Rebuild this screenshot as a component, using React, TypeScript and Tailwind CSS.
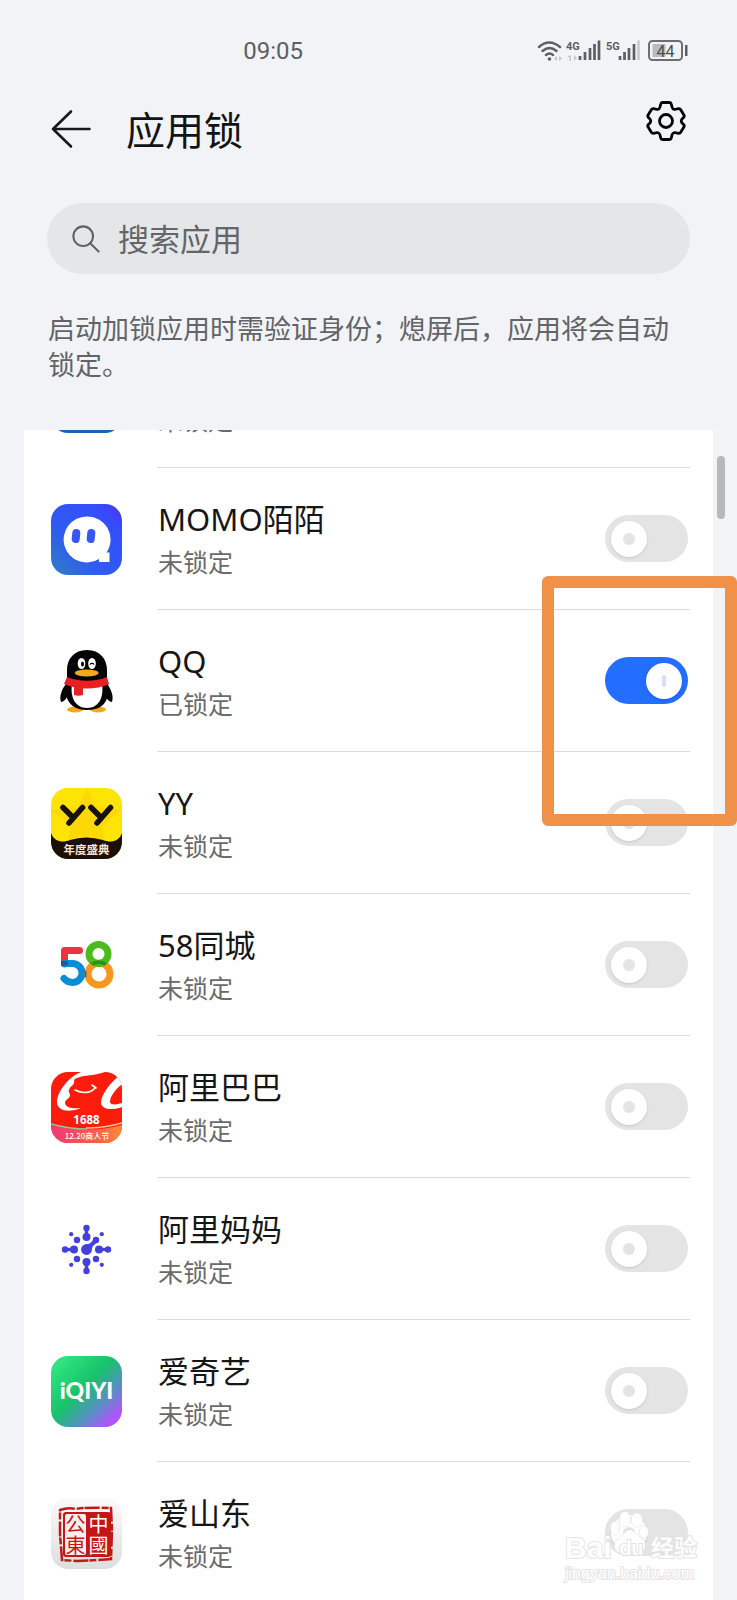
import type { ReactNode } from "react";

function MailIcon() {
  return (
    <svg viewBox="0 0 71 71" className="h-full w-full" aria-hidden="true">
      <rect width="71" height="71" rx="17" fill="#1c63b4" />
      <path d="M14 24h43v26H14z" fill="#fff" />
      <path d="M14 24l21 16 22-16" fill="none" stroke="#1c63b4" strokeWidth="3" />
    </svg>
  );
}

function MomoIcon() {
  return (
    <svg viewBox="0 0 71 71" className="h-full w-full" aria-hidden="true">
      <defs>
        <linearGradient id="momo" x1="0" y1="1" x2="1" y2="0">
          <stop offset="0" stopColor="#2f7fc4" />
          <stop offset="0.35" stopColor="#2f5cf0" />
          <stop offset="0.75" stopColor="#3350fb" />
          <stop offset="1" stopColor="#4a35fa" />
        </linearGradient>
      </defs>
      <rect width="71" height="71" rx="17" fill="url(#momo)" />
      <path d="M35.500 12.500a23 23 0 1 0 12.500 42.400V58h10.500V48.500h-3A23 23 0 0 0 35.500 12.500z" fill="#fff" />
      <rect x="21" y="25" width="8" height="14" rx="4" fill="#3457f5" transform="rotate(6 25 32)" />
      <rect x="36" y="25" width="8" height="14" rx="4" fill="#3457f5" transform="rotate(6 40 32)" />
    </svg>
  );
}

function QqIcon() {
  return (
    <svg viewBox="0 0 71 71" className="h-full w-full" aria-hidden="true">
      <ellipse cx="24" cy="63.500" rx="8" ry="3" fill="#f6a81c" />
      <ellipse cx="47" cy="63.500" rx="8" ry="3" fill="#f6a81c" />
      <path d="M15 38C11 43 8 50 10 56c3 0 6-4 8-9zM56 38c4 5 7 12 5 18-3 0-6-4-8-9z" fill="#050505" />
      <path d="M36 4C23 4 16 13 16 24v11c-2 5-2 10-1 14 2 9 9 15 21 15s19-5 21-15c1-4 1-9-1-14V24C56 13 49 4 36 4z" fill="#050505" />
      <path d="M21 38h30c2 13-3 24-15 24S19 51 21 38z" fill="#fff" />
      <path d="M16 31c12 5 28 5 40 0l2 7c-13 6-31 6-45 0z" fill="#e91f23" />
      <path d="M23 39l9 1v9c-3 1-6 1-9 0z" fill="#e91f23" />
      <ellipse cx="30.500" cy="17.500" rx="3.800" ry="5.500" fill="#fff" />
      <ellipse cx="41" cy="17.500" rx="3.800" ry="5.500" fill="#fff" />
      <ellipse cx="31.500" cy="18" rx="1.500" ry="2.500" fill="#050505" />
      <path d="M39 18.500c1-1.500 3-1.500 4 0" fill="none" stroke="#050505" strokeWidth="1.300" />
      <ellipse cx="35.700" cy="27" rx="12" ry="3.400" fill="#f6a81c" />
    </svg>
  );
}

function YyIcon() {
  return (
    <svg viewBox="0 0 71 71" className="h-full w-full" aria-hidden="true">
      <defs>
        <clipPath id="yyClip">
          <rect width="71" height="71" rx="17" />
        </clipPath>
      </defs>
      <g clipPath="url(#yyClip)">
        <rect width="71" height="71" fill="#fde404" />
        <path d="M36 0l9 19 26 3-20 16 4 18H16l4-18L0 22l27-3z" fill="#fbd008" opacity="0.600" />
        <path d="M0 45c3 9 12 10 19 7q16-5 33 0c7 3 16 2 19-7v26H0z" fill="#1c0f0a" />
        <text x="35.500" y="65.500" textAnchor="middle" fontSize="11.500" className="font-['Noto_Sans_CJK_SC',sans-serif] font-bold" fill="#f9e5cf">
          年度盛典
        </text>
      </g>
      <path d="M12 19.500l8 8M31.500 19.500L18 35M40 19.500l8 8M59.500 19.500L46 35" fill="none" stroke="#17120a" strokeWidth="5.600" strokeLinecap="round" />
    </svg>
  );
}

function TongchengIcon() {
  return (
    <svg viewBox="0 0 71 71" className="h-full w-full" fill="none" strokeWidth="7" aria-hidden="true">
      <path d="M28.500 20.500H13.500V34" stroke="#ee3340" strokeLinecap="round" strokeLinejoin="round" />
      <path d="M13.500 33.500h8a9.500 9.500 0 1 1 0 19q-5 0-8.500-4" stroke="#0b8cd6" strokeLinecap="round" />
      <path d="M13.500 31v4.500" stroke="#1d5a98" />
      <circle cx="48" cy="44" r="11" stroke="#f8961e" />
      <circle cx="47.500" cy="24" r="9.500" stroke="#4bbb1d" />
      <path d="M41 34q6.500 -3.500 14 0" stroke="#2f9020" strokeWidth="3.500" />
      <path d="M34.500 41v6" stroke="#3d6a78" strokeWidth="2" />
    </svg>
  );
}

function AlibabaIcon() {
  return (
    <svg viewBox="0 0 71 71" className="h-full w-full" aria-hidden="true">
      <defs>
        <clipPath id="aliClip">
          <rect width="71" height="71" rx="17" />
        </clipPath>
        <linearGradient id="aliBand">
          <stop offset="0" stopColor="#ee3a75" />
          <stop offset="0.600" stopColor="#fb5a4c" />
          <stop offset="1" stopColor="#fd8b36" />
        </linearGradient>
      </defs>
      <g clipPath="url(#aliClip)">
        <rect width="71" height="71" fill="#fd1b0b" />
        <path d="M0 53q36 9 71 0v18H0z" fill="url(#aliBand)" />
        <path d="M0 52q18 5 36 5" fill="none" stroke="#8fc7a0" strokeWidth="1.500" />
        <path d="M71 51q-17 5 -36 5" fill="none" stroke="#f7c38c" strokeWidth="1.500" />
        <path d="M30 0C19 4 6 19 6 30c0 9 12 11 24 6-8 1-15 0-16-5 0-4 5-4 5-8 0-2-2-3-1-5 1-4 4-4 5-7 1-2-1-3 1-4 6-4 19-3 30-7z" fill="#fff" />
        <path d="M24 18c8 4 16 3 20-2M41 13l4 3" fill="none" stroke="#fff" strokeWidth="1.600" strokeLinecap="round" />
        <path d="M71 1C60 10 50 22 50 31c0 6 11 8 21 4v-4c-6 2-12 2-12-1 0-6 6-13 12-18z" fill="#fff" />
      </g>
      <text x="35.500" y="51.500" textAnchor="middle" fontSize="11.500" className="font-['Noto_Sans'] font-bold" fill="#fff">
        1688
      </text>
      <text x="36" y="67" textAnchor="middle" fontSize="8" className="font-['Noto_Sans_CJK_SC',sans-serif] font-medium" fill="#fff">
        12.20商人节
      </text>
    </svg>
  );
}

function AlimamaIcon() {
  return (
    <svg viewBox="-35.500 -35.500 71 71" className="h-full w-full" fill="#4440dc" stroke="none" aria-hidden="true">
      {[0, 90, 180, 270].map((angle) => (
        <g key={angle} transform={`rotate(${angle})`}>
          <circle cx="12.500" cy="0" r="4" />
          <circle cx="21.500" cy="0" r="3.200" />
          <path d="M14 -3q3 2.500 6.500 .5v5q-3.500 -2 -6.500 .5z" />
          <circle cx="9.500" cy="9.500" r="3.200" />
          <circle cx="15.300" cy="15.300" r="2.100" />
        </g>
      ))}
      <circle r="5.400" />
      <path d="M-1 -5q6 0 8.500 -7l4.500 4.500q-7 3 -7 9z" />
    </svg>
  );
}

function IqiyiIcon() {
  return (
    <svg viewBox="0 0 71 71" className="h-full w-full" aria-hidden="true">
      <defs>
        <linearGradient id="iqiyi" x1="0" y1="0" x2="1" y2="1">
          <stop offset="0" stopColor="#37ee82" />
          <stop offset="0.450" stopColor="#17c26c" />
          <stop offset="0.680" stopColor="#5590c0" />
          <stop offset="0.880" stopColor="#b154fb" />
        </linearGradient>
      </defs>
      <rect width="71" height="71" rx="17" fill="url(#iqiyi)" />
      <text x="35.500" y="43" textAnchor="middle" fontSize="23" className="font-[Lato] font-black" fill="#fff">
        iQIYI
      </text>
    </svg>
  );
}

function ShandongIcon() {
  return (
    <svg viewBox="0 0 71 71" className="h-full w-full" aria-hidden="true">
      <defs>
        <linearGradient id="paper" x1="0" y1="0" x2="0" y2="1">
          <stop offset="0" stopColor="#fafafa" />
          <stop offset="1" stopColor="#dedede" />
        </linearGradient>
      </defs>
      <rect width="71" height="71" rx="17" fill="url(#paper)" />
      <path d="M9 12q8-3 16-1 12-2 35-1l1 22-1 29-14 1-20 1-15-1-2-26z" fill="none" stroke="#bf1a1a" strokeWidth="2.500" strokeDasharray="15 2 7 1" />
      <rect x="12" y="14" width="48" height="45" rx="3" fill="#c41616" />
      <rect x="14" y="16" width="21" height="41" rx="2" fill="#f8eeee" />
      <g className="font-['Noto_Sans_CJK_SC',sans-serif]" fontSize="20" textAnchor="middle">
        <text x="24.500" y="33.500" fill="#c41616">公</text>
        <text x="24.500" y="54.500" fill="#c41616">東</text>
        <text x="47.500" y="33.500" fill="#fff">中</text>
        <text x="47.500" y="54.500" fill="#fff">國</text>
      </g>
    </svg>
  );
}

function StatusIcons() {
  return (
    <svg viewBox="0 0 152 24" className="h-6 w-[152px]" fill="none" aria-label="Wi-Fi, 4G, 5G, 44%" role="img">
      <g stroke="#5d5f62" strokeWidth="2.400" strokeLinecap="round">
        <path d="M2 8q10-9 21 0M5.500 12q7-6 14 0M9 16q3.500-3 7 0" />
      </g>
      <circle cx="12.500" cy="20" r="1.800" fill="#5d5f62" />
      <path d="M17 19.500l3-2.500v5zM25 19.500l-3-2.500v5zM30 19l2.500-3v6h1.500v-6M40 19l-3-3v6z" fill="#c3c5c9" />
      <g fontSize="11" className="font-[Roboto] font-bold" fill="#5d5f62">
        <text x="29" y="11">4G</text>
        <text x="69" y="11">5G</text>
      </g>
      <g stroke="#5d5f62" strokeWidth="2.700">
        <path d="M43 21v-4M48 21v-8M53 21V9M57.500 21V5M62 21V1.500M83 21v-4M87.500 21v-8M92 21V9M97 21V5" />
      </g>
      <path d="M101.500 21V1.500" stroke="#c9cbcf" strokeWidth="2.700" />
      <rect x="112" y="2" width="33" height="19" rx="3.500" stroke="#6c6e71" strokeWidth="2" />
      <rect x="115.500" y="5" width="13" height="13" fill="#b9bbbe" />
      <rect x="148" y="6" width="2.500" height="11" fill="#5d5f62" />
      <text x="128.500" y="17.500" textAnchor="middle" fontSize="16" className="font-[Roboto]" fill="#4c4e51">
        44
      </text>
    </svg>
  );
}

type AppEntry = {
  id: string;
  name?: string;
  icon: ReactNode;
  locked?: boolean;
};

const apps: AppEntry[] = [
  { id: "mail", icon: <MailIcon /> },
  { id: "momo", name: "MOMO陌陌", icon: <MomoIcon /> },
  { id: "qq", name: "QQ", icon: <QqIcon />, locked: true },
  { id: "yy", name: "YY", icon: <YyIcon /> },
  { id: "58", name: "58同城", icon: <TongchengIcon /> },
  { id: "1688", name: "阿里巴巴", icon: <AlibabaIcon /> },
  { id: "alimama", name: "阿里妈妈", icon: <AlimamaIcon /> },
  { id: "iqiyi", name: "爱奇艺", icon: <IqiyiIcon /> },
  { id: "shandong", name: "爱山东", icon: <ShandongIcon /> },
];

function AppRow({ id, name, icon, locked = false }: AppEntry) {
  return (
    <li className="flex h-[142px] items-center gap-[35px] pr-[23px] pl-[27px]">
      <div className="h-[71px] w-[71px] shrink-0">{icon}</div>
      <label className="flex h-full flex-1 items-center justify-between border-b border-[#dcdcdc] pr-0.5 pl-px">
        <span className="flex flex-col pt-0.5">
          <span className="h-[42px] font-['Noto_Sans','Noto_Sans_CJK_SC',sans-serif] text-[31px] leading-[42px] text-[#161616]">
            {name}
          </span>
          <span className="text-[25px] leading-[42px] text-[#6a6a6a]">{locked ? "已锁定" : "未锁定"}</span>
        </span>
        <input
          type="checkbox"
          role="switch"
          aria-label={name ?? id}
          defaultChecked={locked}
          className="grid h-[47px] w-[83px] shrink-0 appearance-none content-center justify-start rounded-full bg-[#e4e4e4] px-1.5 before:col-start-1 before:row-start-1 before:h-9 before:w-9 before:rounded-full before:bg-white before:shadow-sm after:col-start-1 after:row-start-1 after:h-3 after:w-3 after:place-self-center after:rounded-full after:bg-[#e4e4e4] checked:justify-end checked:bg-[#236dff] checked:after:w-1 checked:after:rounded-sm checked:after:bg-[#d5dffc]"
        />
      </label>
    </li>
  );
}

function Watermark() {
  return (
    <div className="pointer-events-none absolute right-10 bottom-4 w-[132px] font-['Liberation_Sans','Noto_Sans_CJK_SC',sans-serif] text-white opacity-90 [paint-order:stroke] [-webkit-text-stroke:2px_#e2e2e2]">
      <svg viewBox="0 0 44 60" className="absolute bottom-4 left-11 h-[60px] w-11" fill="#fff" stroke="#dcdcdc" aria-hidden="true">
        <ellipse cx="16" cy="11" rx="5.500" ry="7.500" />
        <ellipse cx="28" cy="12" rx="5.500" ry="7" />
        <ellipse cx="6" cy="20" rx="4.500" ry="6.500" />
        <ellipse cx="35" cy="24" rx="4.500" ry="6" />
        <path d="M21 22c-5 0-7 6-12 9-5 4-5 13 3 14 6 1 12 1 18 0 8-1 8-10 3-14-5-3-7-9-12-9z" />
      </svg>
      <div className="relative flex items-center justify-between font-bold">
        <span className="text-[30px] leading-8">Bai</span>
        <span className="text-xl leading-8">du</span>
        <span className="text-[23px] leading-8">经验</span>
      </div>
      <div className="relative text-base leading-5">jingyan.baidu.com</div>
    </div>
  );
}

export default function App() {
  return (
    <div className="relative flex h-screen flex-col overflow-hidden bg-[#f1f3f7] font-['Noto_Sans_CJK_SC',sans-serif]">
      {/* status bar */}
      <div className="flex h-[101px] shrink-0 items-center justify-between pr-12 pl-[33%] text-[#5d5f62]">
        <span className="font-[Roboto] text-2xl">09:05</span>
        <StatusIcons />
      </div>

      {/* title bar */}
      <header className="flex h-14 shrink-0 items-center pr-[51px] pl-[51px]">
        <button type="button" aria-label="返回" className="h-10 w-10">
          <svg viewBox="0 0 40 40" className="h-10 w-10" fill="none" stroke="#17181a" strokeWidth="2.600" strokeLinecap="round" strokeLinejoin="round">
            <path d="M38.500 20H2M20 2.500L2 20l18 17.500" />
          </svg>
        </button>
        <h1 className="ml-[35px] flex-1 self-start text-[39px] leading-[54px] text-[#121316]">应用锁</h1>
        <button type="button" aria-label="设置" className="h-10 w-10 self-start">
          <svg viewBox="0 0 40 40" className="h-10 w-10" fill="none" stroke="#050505" strokeWidth="2.800" strokeLinejoin="round">
            <path d="M16.500 1.500h7q1.500 0 1.800 1.500l.7 3q.5 2 2.500 2.500l4-.8q1.500-.2 2.200 1l3.200 5.300q.8 1.300-.3 2.400l-1.600 1.600q-1.400 2 0 4l1.600 1.600q1.100 1.100.3 2.400l-3.200 5.300q-.7 1.200-2.200 1l-4-.8q-2 .5-2.500 2.500l-.7 3q-.3 1.500-1.800 1.500h-7q-1.500 0-1.800-1.500l-.7-3q-.5-2-2.500-2.500l-4 .8q-1.500.2-2.200-1L2.100 26q-.8-1.300.3-2.400L4 22q1.400-2 0-4l-1.600-1.600Q1.300 15.300 2.100 14l3.200-5.300q.7-1.200 2.200-1l4 .8q2-.5 2.500-2.500l.7-3q.3-1.500 1.800-1.500z" />
            <circle cx="20" cy="20" r="6.500" />
          </svg>
        </button>
      </header>

      {/* search */}
      <label className="mx-[47px] mt-[46px] flex h-[71px] shrink-0 items-center gap-[18px] rounded-full bg-[#e5e6e8] px-[25px]">
        <svg viewBox="0 0 30 30" className="h-7 w-7 shrink-0" fill="none" stroke="#5f6164" strokeWidth="2.200" strokeLinecap="round" aria-hidden="true">
          <circle cx="12" cy="12" r="10.500" />
          <path d="M19.500 19.500l9 9" />
        </svg>
        <input type="search" aria-label="搜索应用" placeholder="搜索应用" className="w-full bg-transparent text-[31px] outline-none placeholder:text-[#636568]" />
      </label>

      <p className="mx-12 mt-9 shrink-0 text-[27px] leading-9 text-[#626467]">
        启动加锁应用时需验证身份；熄屏后，应用将会自动锁定。
      </p>

      {/* app list, scrolled part of the way past its first row */}
      <main className="mx-6 mt-12 min-h-0 flex-1 overflow-hidden bg-white">
        <ul className="-mt-26">
          {apps.map((app) => (
            <AppRow key={app.id} {...app} />
          ))}
        </ul>
      </main>

      {/* scroll thumb */}
      <div className="absolute top-[456px] right-3 h-[63px] w-2 rounded-full bg-[#b7b8bc]" />

      {/* highlight box */}
      <div className="pointer-events-none absolute top-[576px] right-0 h-[250px] w-[195px] rounded-md border-12 border-[#f0914a]" />

      <Watermark />
    </div>
  );
}
